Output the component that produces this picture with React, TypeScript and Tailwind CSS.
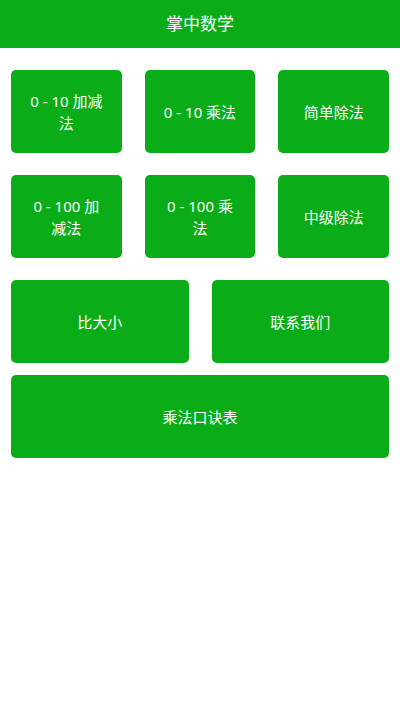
const rows: string[][] = [
  ["0 - 10 加减法", "0 - 10 乘法", "简单除法"],
  ["0 - 100 加减法", "0 - 100 乘法", "中级除法"],
];

function Tile({ label }: { label: string }) {
  return (
    <button className="h-[83px] rounded-[5px] bg-[#0aad17] px-4 text-[15px] leading-[22px] text-white text-center flex items-center justify-center">
      {label}
    </button>
  );
}

export default function App() {
  return (
    <div
      className="min-h-[711px] w-[400px] bg-white"
      style={{ fontFamily: '"Noto Sans", "Noto Sans CJK SC", sans-serif' }}
    >
      <header className="h-12 bg-[#0aad17] flex items-center justify-center text-white text-[17px]">
        掌中数学
      </header>
      <div className="px-[11px] pt-[22px]">
        {rows.map((row, i) => (
          <div key={i} className="grid grid-cols-3 gap-x-[23px] mb-[22px]">
            {row.map((l) => (
              <Tile key={l} label={l} />
            ))}
          </div>
        ))}
        <div className="grid grid-cols-2 gap-x-[23px] mb-3">
          <Tile label="比大小" />
          <Tile label="联系我们" />
        </div>
        <div className="grid grid-cols-1">
          <Tile label="乘法口诀表" />
        </div>
      </div>
    </div>
  );
}
